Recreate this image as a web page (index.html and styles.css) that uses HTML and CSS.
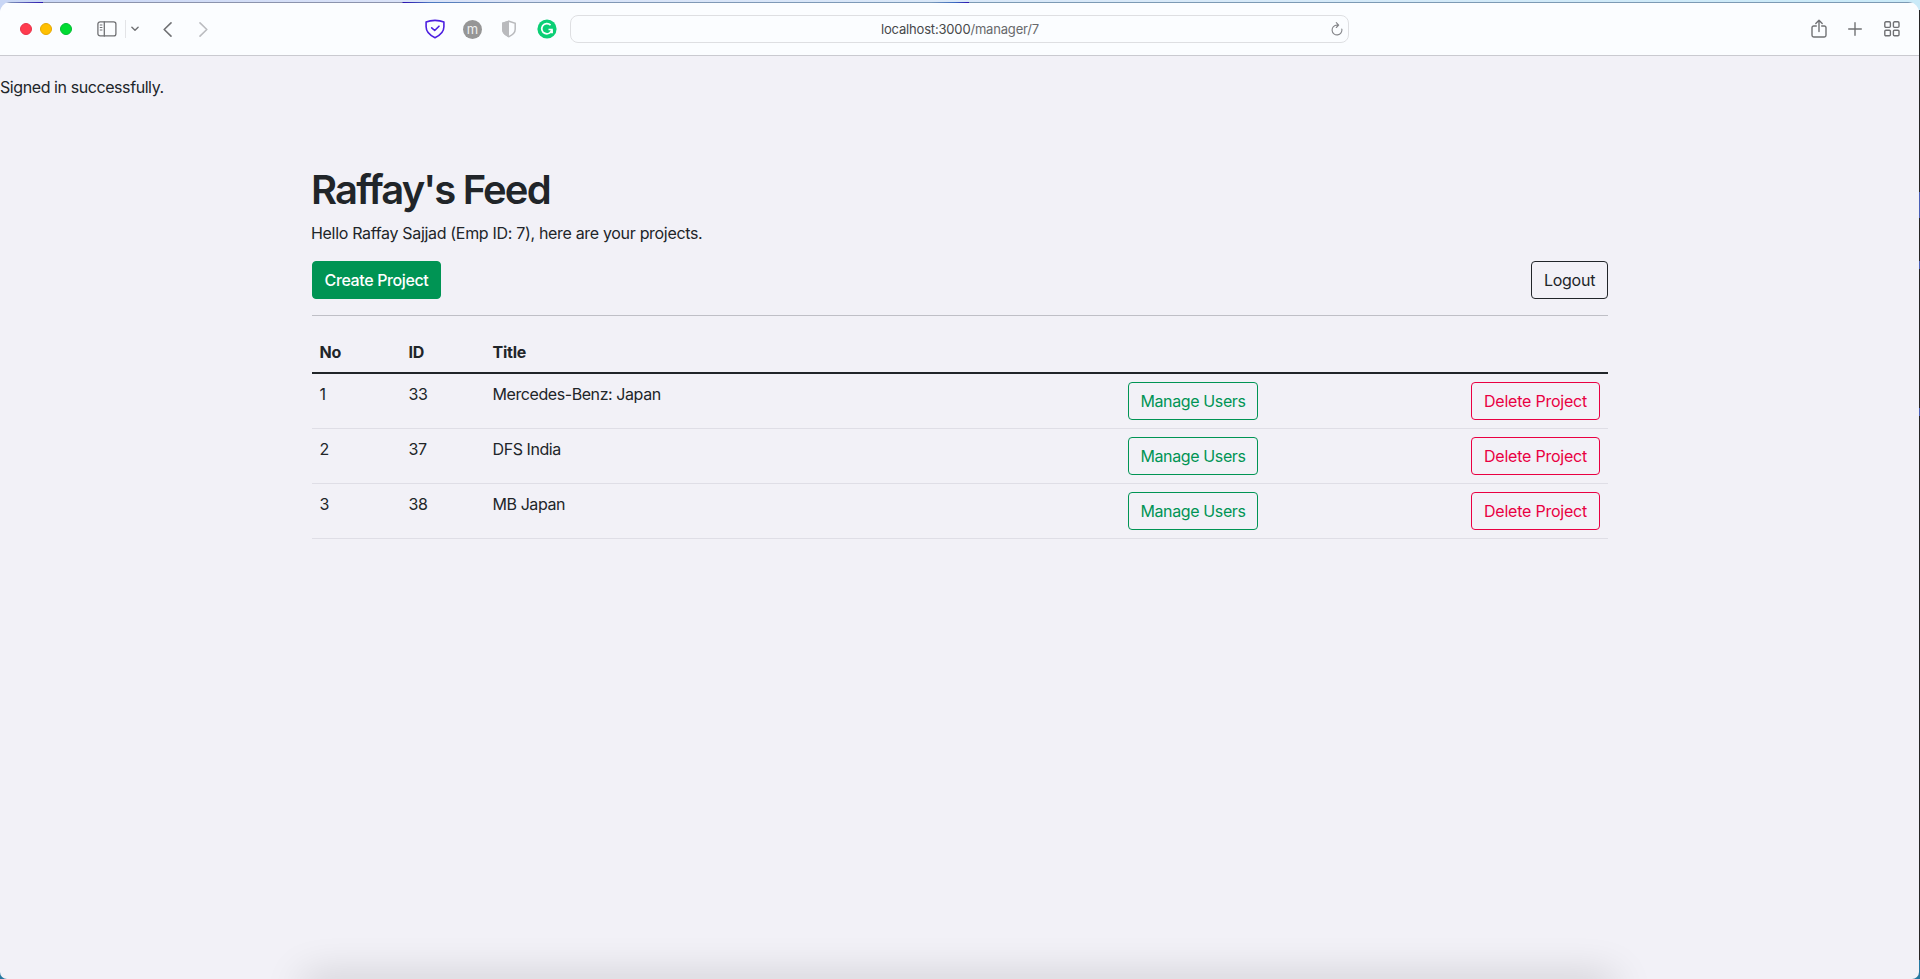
FILE: index.html
```html
<!DOCTYPE html>
<html lang="en">
<head>
<meta charset="utf-8">
<title>Raffay's Feed</title>
<link rel="stylesheet" href="styles.css">
</head>
<body>
<div class="desktop">
<div class="window">
  <header class="toolbar">
    <div class="lights"><i class="light red"></i><i class="light yellow"></i><i class="light green"></i></div>
    <svg class="ic sidebar" width="20" height="16" viewBox="0 0 20 16"><rect x=".9" y=".9" width="18" height="14" rx="2.2"/><path d="M7.300 1v14"/><path d="M3.200 4h1.800M3.200 6.500h1.800M3.200 9h1.800" stroke-width="1"/></svg>
    <span class="divider"></span>
    <svg class="ic drop" width="8" height="6" viewBox="0 0 8 6"><path d="M.9 1.200 4 4.300 7.100 1.200"/></svg>
    <svg class="ic back" width="9" height="15" viewBox="0 0 9 15"><path d="M8 .9 1.200 7.500 8 14.100"/></svg>
    <svg class="ic forward" width="9" height="15" viewBox="0 0 9 15"><path d="M1 .9 7.800 7.500 1 14.100"/></svg>
    <div class="extensions">
      <svg width="20" height="20" viewBox="0 0 20 20" fill="none" stroke="#4d1fe0" stroke-width="1.600" stroke-linecap="round" stroke-linejoin="round"><path d="M10 1.400C7 1.400 3.900 1.800 1.100 3v4.800c0 4.300 3.500 8.400 8.900 10.900 5.400-2.500 8.900-6.600 8.900-10.900V3C16.100 1.800 13 1.400 10 1.400Z"/><path d="m6.700 8.800 3 2.700 4.300-4.300"/></svg>
      <span class="m-badge">m</span>
      <svg width="16" height="18" viewBox="0 0 16 18"><path d="M8 1.300 14.200 3.300v6c0 3.300-2.500 5.600-6.200 7.300-3.700-1.700-6.200-4-6.200-7.300v-6Z" fill="#fbfdff" stroke="#b9babd" stroke-width="1.500"/><path d="M8 .6v16.800C3.700 15.600 1 13 1 9.300V2.800Z" fill="#b9babd"/></svg>
      <svg width="20" height="20" viewBox="0 0 20 20"><circle cx="10" cy="10" r="9.600" fill="#0bcf75"/><path d="M13.600 6.200a5.100 5.100 0 1 0 1.300 4.300h-3.400M12.800 13.400h2.300v-2.600" fill="none" stroke="#fff" stroke-width="1.700"/></svg>
    </div>
    <div class="address"><span class="url">localhost:3000<span class="path">/manager/7</span></span>
      <svg class="ic reload" width="12" height="14" viewBox="0 0 12 14"><path d="M10.800 7A4.900 4.900 0 1 1 6 3.100h1.600M5.300.7 7.700 3.100 5.300 5.500"/></svg>
    </div>
    <div class="actions">
      <svg class="ic share" width="16" height="20" viewBox="0 0 16 20"><path d="M5.300 7H2.700A1.700 1.700 0 0 0 1 8.700v7.600A1.700 1.700 0 0 0 2.700 18h10.600a1.700 1.700 0 0 0 1.700-1.700V8.700A1.700 1.700 0 0 0 13.300 7h-2.600M8 12.500V1.400M4.800 4.500 8 1.300l3.200 3.200"/></svg>
      <svg class="ic" width="14" height="14" viewBox="0 0 14 14"><path d="M7 .7v12.600M.7 7h12.600"/></svg>
      <svg class="ic" width="16" height="16" viewBox="0 0 16 16"><rect x=".8" y=".8" width="5.600" height="5.600" rx="1.100"/><rect x="9.400" y=".8" width="5.600" height="5.600" rx="1.100"/><rect x=".8" y="9.200" width="5.600" height="5.600" rx="1.100"/><rect x="9.400" y="9.200" width="5.600" height="5.600" rx="1.100"/></svg>
    </div>
  </header>
  <main class="page">
    <p class="notice">Signed in successfully.</p>
    <div class="container">
      <h1>Raffay's Feed</h1>
      <p class="intro">Hello Raffay Sajjad (Emp ID: 7), here are your projects.</p>
      <div class="buttons"><a class="btn create">Create Project</a><a class="btn logout">Logout</a></div>
      <hr>
      <table>
        <colgroup><col class="c-no"><col class="c-id"><col class="c-title"><col class="c-manage"><col class="c-delete"></colgroup>
        <thead><tr><th>No</th><th>ID</th><th>Title</th><th></th><th></th></tr></thead>
        <tbody>
          <tr><td>1</td><td>33</td><td>Mercedes-Benz: Japan</td><td><a class="btn manage">Manage Users</a></td><td><a class="btn delete">Delete Project</a></td></tr>
          <tr><td>2</td><td>37</td><td>DFS India</td><td><a class="btn manage">Manage Users</a></td><td><a class="btn delete">Delete Project</a></td></tr>
          <tr><td>3</td><td>38</td><td>MB Japan</td><td><a class="btn manage">Manage Users</a></td><td><a class="btn delete">Delete Project</a></td></tr>
        </tbody>
      </table>
    </div>
    <div class="dock-shadow"></div>
  </main>
</div>
</div>
</body>
</html>
```
FILE: styles.css
```css
* { box-sizing: border-box; }
body { margin: 0; font: 16px/24px Inter, "Liberation Sans", sans-serif; color: #212529; }
p, h1 { margin: 0; }
svg { display: block; flex: none; }
.desktop {
  height: 979px; padding: 2px 1px 0 0; overflow: hidden;
  background:
    linear-gradient(#4a5fb5, #4a5fb5) right 192px / 1px 26px no-repeat,
    linear-gradient(#4a5fb5, #4a5fb5) right 261px / 1px 8px no-repeat,
    linear-gradient(#4a5fb5, #4a5fb5) right 408px / 1px 8px no-repeat,
    linear-gradient(#252525, #252525) right 10px / 1px 950px no-repeat,
    linear-gradient(90deg, #c8d6f5, #d9e2f8 20%, #d8e9f8 60%, #c9eaf8) top / 100% 12px no-repeat,
    #2678a0;
}
.window { height: 977px; border-radius: 11px 11px 7px 7px; overflow: hidden; background: #f2f1f7; display: flex; flex-direction: column; }
.toolbar {
  height: 54px; flex: none; display: flex; align-items: center; padding: 1px 16px 0 20px;
  border-bottom: 1px solid #cacad0;
  background:
    linear-gradient(90deg, #7c8fb8 10px, #2a18b0 43px, #8b93ad 43px, #8b93ad 402px, #2b12b0 403px, #4a78c0 430px, #8297b4 520px, #7c9ab8 930px, #3a6ac0 955px, #2b12b0 969px, #7c9ab4 969px) top / 100% 1px no-repeat,
    #fbfdff;
}
.lights { display: flex; gap: 8px; }
.light { width: 12px; height: 12px; border-radius: 50%; }
.red { background: #ff3b4e; border: 1px solid #e9304a; }
.yellow { background: #ffc000; border: 1px solid #e5a900; }
.green { background: #00dc32; border: 1px solid #00bd32; }
.ic { fill: none; stroke: #707174; stroke-width: 1.4; stroke-linecap: round; stroke-linejoin: round; }
.sidebar { margin-left: 25px; stroke-width: 1.3; }
.divider { width: 1px; height: 18px; background: #e3e4e7; margin-left: 8px; }
.drop { margin-left: 5px; }
.back { margin-left: 24px; stroke-width: 1.6; }
.forward { margin-left: 27px; stroke: #bbbcc0; stroke-width: 1.6; }
.extensions { display: flex; align-items: center; margin-left: 217px; width: 145px; }
.m-badge { width: 19px; height: 19px; margin-left: 18px; margin-right: 19px; border-radius: 50%; background: #969696; color: #eee; font-size: 13px; line-height: 18px; text-align: center; }
.extensions svg:last-child { margin-left: 20px; }
.address { width: 779px; height: 28px; border: 1px solid #dedfe2; border-radius: 8px; display: flex; align-items: center; padding: 0 5px 0 310px; }
.url { font-size: 13px; color: #47484a; letter-spacing: -.18px; white-space: nowrap; }
.path { color: #68696c; }
.reload { margin-left: auto; stroke: #85868a; stroke-width: 1.1; }
.actions { display: flex; align-items: center; gap: 22px; margin-left: auto; padding-right: 3px; }
.share { margin-right: -1px; }
.page { position: relative; flex: 1; padding-top: 19px; overflow: hidden; }
.notice { letter-spacing: -.42px; }
.container { width: 1296px; margin: 66px 0 0 312px; }
h1 { font-size: 40px; line-height: 48px; font-weight: 600; margin: 0 0 8px -1px; padding-top: 1px; height: 48px; letter-spacing: -1.85px; }
.intro { margin: 0 0 16px -1px; letter-spacing: -.32px; }
.buttons { display: flex; justify-content: space-between; }
.btn { display: flex; width: 130px; height: 38px; align-items: center; justify-content: center; border: 1px solid; border-radius: 4px; letter-spacing: -.38px; white-space: nowrap; }
.create { width: 129px; background: #009454; border-color: #009454; color: #fff; font-weight: 500; }
.logout { width: 77px; letter-spacing: -.25px; }
.manage { color: #009454; }
.delete { width: 129px; color: #e90042; letter-spacing: -.23px; }
hr { height: 1px; border: 0; margin: 16px 0; background: #bfbfc6; }
table { width: 1296px; table-layout: fixed; border-collapse: separate; border-spacing: 0; }
.c-no { width: 89px; }
.c-id { width: 84px; }
.c-title { width: 635px; }
.c-manage { width: 343px; }
.c-delete { width: 145px; }
th, td { padding: 8px 8px 8px 7.500px; text-align: left; vertical-align: top; border-bottom: 1px solid #dfdee6; letter-spacing: -.42px; }
td:nth-child(n+4) { padding-left: 8px; }
th { border-bottom: 2px solid #212529; font-weight: 700; letter-spacing: -.25px; }
.dock-shadow { position: absolute; left: 305px; bottom: -20px; width: 1308px; height: 20px; box-shadow: 0 0 42px 1px rgba(0, 0, 0, .2); }
```
